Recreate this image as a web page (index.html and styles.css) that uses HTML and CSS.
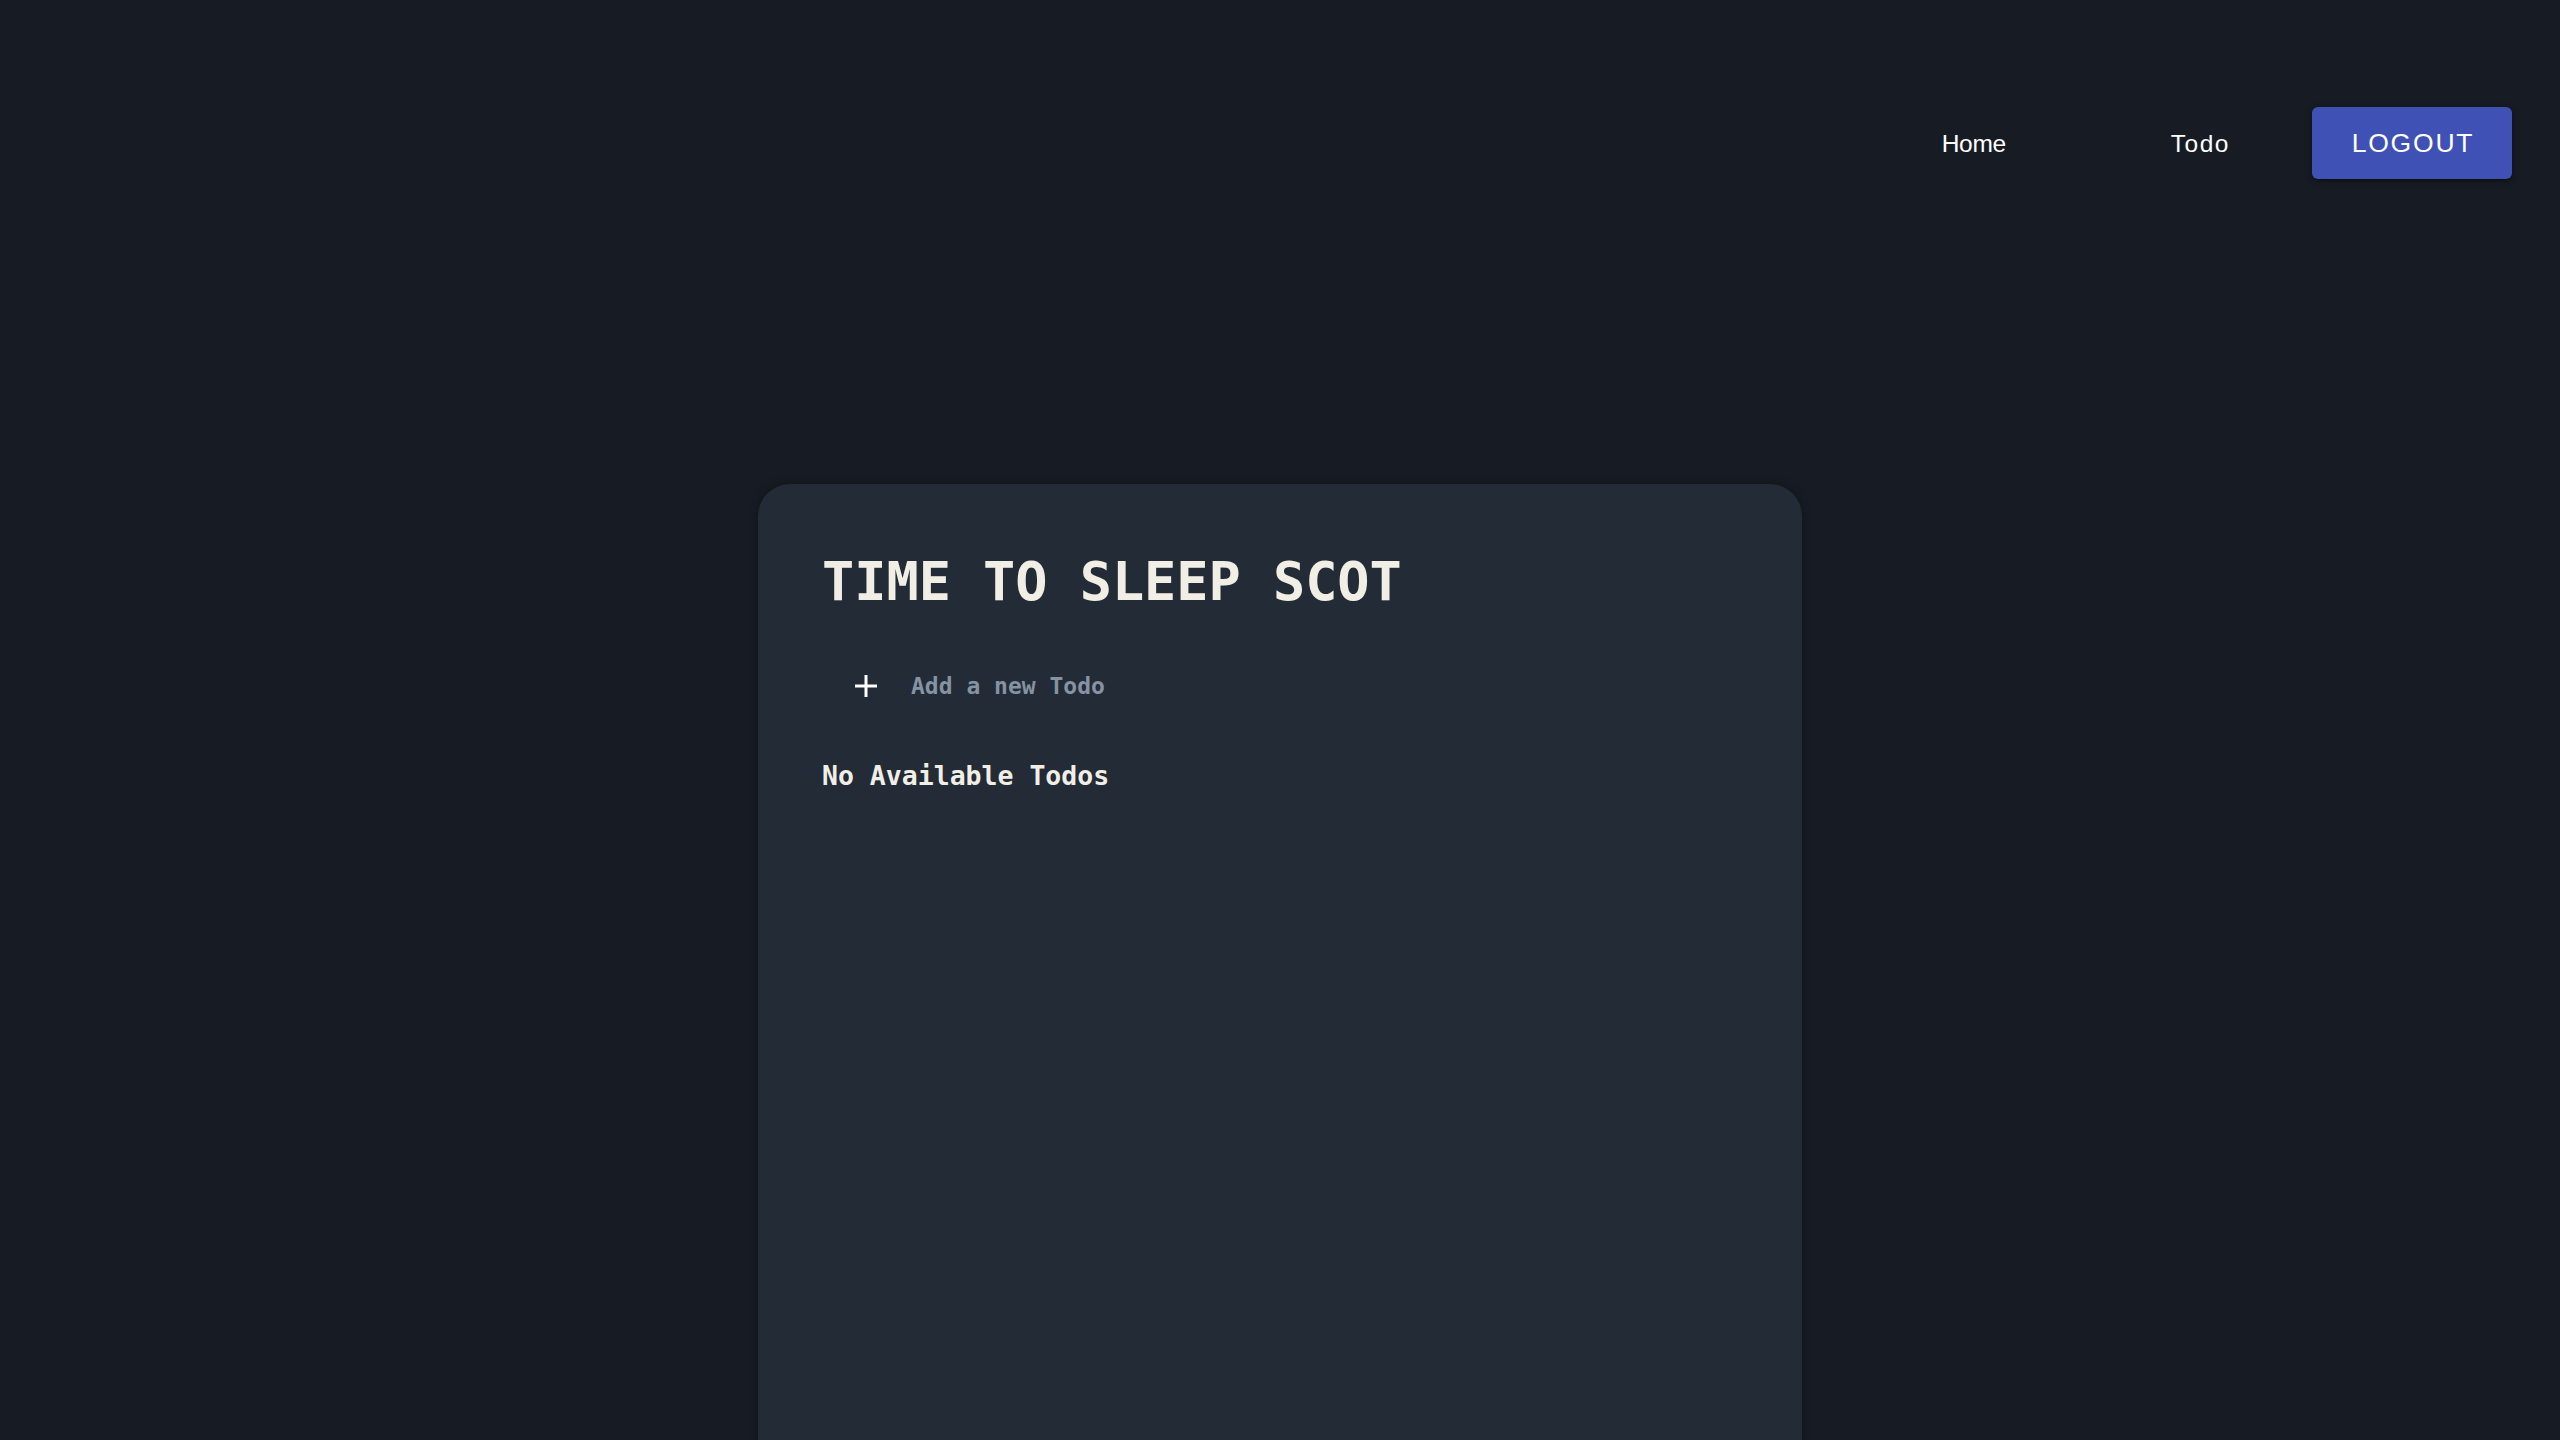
FILE: index.html
```html
<!DOCTYPE html>
<html lang="en">
<head>
<meta charset="utf-8">
<title>Todo</title>
<link rel="stylesheet" href="styles.css">
</head>
<body>
<header class="topbar">
  <nav class="nav">
    <a class="nav-link nav-home" href="#">Home</a>
    <a class="nav-link nav-todo" href="#">Todo</a>
    <button class="logout-btn" type="button">LOGOUT</button>
  </nav>
</header>
<main class="main">
  <section class="card">
    <h1 class="title">TIME TO SLEEP SCOT</h1>
    <div class="add-row">
      <svg class="plus-icon" width="24" height="24" viewBox="0 0 24 24" aria-hidden="true">
        <path d="M12 1v22M1 12h22" stroke="#ffffff" stroke-width="3" fill="none"/>
      </svg>
      <span class="add-text">Add a new Todo</span>
    </div>
    <p class="empty">No Available Todos</p>
  </section>
</main>
</body>
</html>
```

FILE: styles.css
```css
html, body {
  margin: 0;
  padding: 0;
}
body {
  background: #171c24;
  min-height: 100vh;
  overflow: hidden;
}
.topbar {
  display: flex;
  justify-content: flex-end;
  padding: 107px 48px 0 0;
}
.nav {
  display: flex;
  align-items: center;
}
.nav-link {
  font-family: "Liberation Sans", Arial, sans-serif;
  font-size: 24.5px;
  letter-spacing: -0.3px;
  color: #ffffff;
  text-decoration: none;
  line-height: 1;
  padding-top: 2px;
}
.nav-home {
  margin-right: 165px;
}
.nav-todo {
  margin-right: 82px;
  letter-spacing: 1.5px;
}
.logout-btn {
  width: 200px;
  height: 72px;
  background: #3f51b5;
  color: #ffffff;
  border: none;
  border-radius: 6px;
  font-family: "Liberation Sans", Arial, sans-serif;
  font-size: 26.5px;
  letter-spacing: 1.8px;
  padding: 0 0 0 2px;
  box-shadow: 0 3px 1px -2px rgba(0,0,0,0.2), 0 2px 4px rgba(0,0,0,0.28), 0 1px 8px rgba(0,0,0,0.2);
  cursor: pointer;
}
.main {
  display: flex;
  justify-content: center;
  padding-top: 305px;
}
.card {
  width: 1044px;
  min-height: 1100px;
  box-sizing: border-box;
  background: #222b36;
  border-radius: 32px;
  padding: 65px 64px 0 64px;
  box-shadow: 0 0 10px rgba(0,0,0,0.35);
  font-family: "DejaVu Sans Mono", monospace;
}
.title {
  margin: 0;
  font-size: 53.5px;
  line-height: 65px;
  font-weight: bold;
  color: #f1eee6;
  letter-spacing: 0;
}
.add-row {
  display: flex;
  align-items: center;
  height: 48px;
  margin-top: 48px;
  padding-left: 32px;
}
.plus-icon {
  width: 24px;
  height: 24px;
  margin-right: 33px;
}
.add-text {
  font-size: 23px;
  font-weight: bold;
  color: #8593a3;
}
.empty {
  margin: 50px 0 0 0;
  font-size: 26.5px;
  line-height: 32px;
  font-weight: bold;
  color: #f1eee6;
}
```
